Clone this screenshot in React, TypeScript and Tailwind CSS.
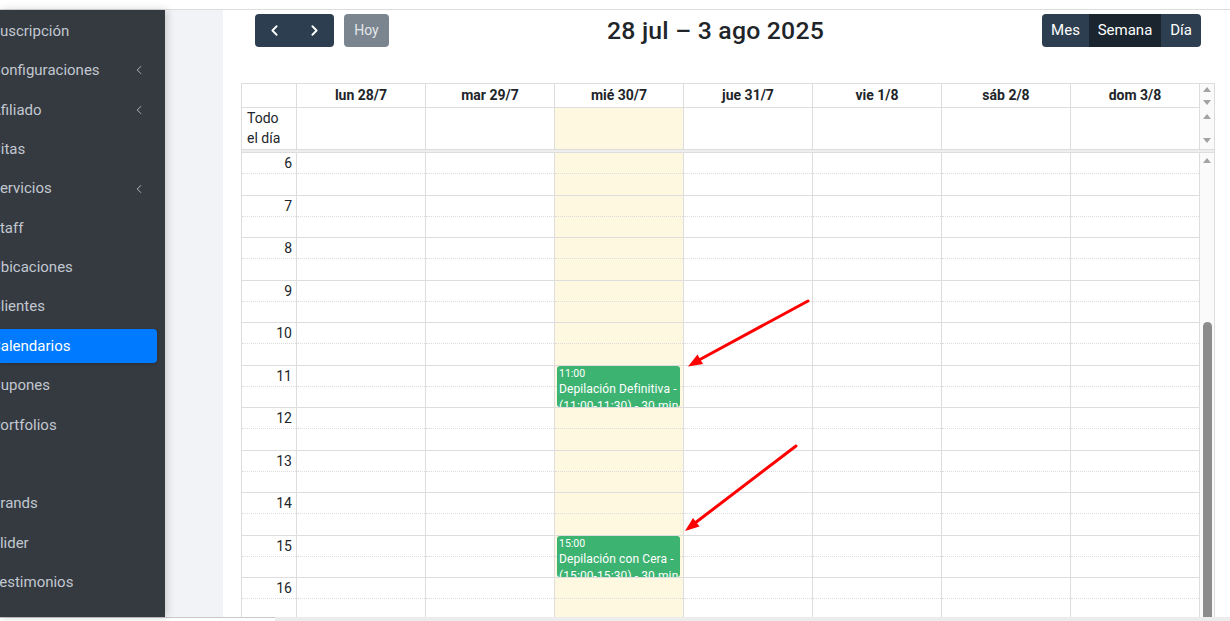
import { ChevronLeft, ChevronRight } from "lucide-react";

const menu = [
  { label: "Suscripción" },
  { label: "Configuraciones", sub: true },
  { label: "Afiliado", sub: true },
  { label: "Citas" },
  { label: "Servicios", sub: true },
  { label: "Staff" },
  { label: "Ubicaciones" },
  { label: "Clientes" },
  { label: "Calendarios", active: true },
  { label: "Cupones" },
  { label: "Portfolios" },
  { label: "" },
  { label: "Brands" },
  { label: "Slider" },
  { label: "Testimonios" },
];

const days = ["lun 28/7", "mar 29/7", "mié 30/7", "jue 31/7", "vie 1/8", "sáb 2/8", "dom 3/8"];
const hours = [6, 7, 8, 9, 10, 11, 12, 13, 14, 15, 16, 17];
const TODAY = 2;

const events = [
  { top: "top-[212.5px]", time: "11:00", title: "Depilación Definitiva -", detail: "(11:00-11:30) - 30 min" },
  { top: "top-[382.5px]", time: "15:00", title: "Depilación con Cera -", detail: "(15:00-15:30) - 30 min" },
];

function Tri({ up }: { up?: boolean }) {
  return (
    <svg width="8" height="5" viewBox="0 0 8 5" className="block">
      <path d={up ? "M0 5 L4 0 L8 5 Z" : "M0 0 L4 5 L8 0 Z"} fill="#a3a3a3" />
    </svg>
  );
}

function HourSlots() {
  return (
    <>
      {hours.map((h) => (
        <div key={h} className="h-[42.5px]">
          <div className="h-[21.25px] border-b border-dotted border-[#ddd]" />
          <div className="h-[21.25px] border-b border-[#ddd]" />
        </div>
      ))}
    </>
  );
}

function Sidebar() {
  return (
    <aside className="relative z-10 w-[165px] shrink-0 overflow-hidden bg-[#343a40] pt-[4px] shadow-[2px_0_8px_rgba(0,0,0,0.18)]">
      <ul className="flex flex-col gap-[5.4px]">
        {menu.map((item, i) => (
          <li
            key={i}
            className={
              item.active
                ? "flex h-[34px] w-[157px] items-center rounded-r-[4px] bg-[#007bff] text-white shadow-[0_1px_3px_rgba(0,0,0,0.2)]"
                : "flex h-[34px] w-[157px] items-center text-[#c2c7d0]"
            }
          >
            <span className="-ml-[9px] flex-1 whitespace-nowrap text-[15px]">{item.label}</span>
            {item.sub && <ChevronLeft size={14} strokeWidth={1.5} className="mr-[11px] text-[#c2c7d0]" />}
          </li>
        ))}
      </ul>
    </aside>
  );
}

function Toolbar() {
  return (
    <div className="flex items-center justify-between pl-[32px] pr-[29px] pt-[4px]">
      <div className="flex gap-[10px]">
        <div className="flex h-[33px] overflow-hidden rounded-[4px] bg-[#2c3e50] text-white">
          <button className="flex w-[39.5px] items-center justify-center">
            <ChevronLeft size={17} strokeWidth={2.6} />
          </button>
          <button className="flex w-[39.5px] items-center justify-center">
            <ChevronRight size={17} strokeWidth={2.6} />
          </button>
        </div>
        <button className="h-[33px] w-[45px] rounded-[4px] bg-[#7b8590] text-[14px] text-[#e4e7ea]">Hoy</button>
      </div>
      <h2 className="text-[24.8px] font-medium leading-[32px] tracking-[0.2px] text-[#212529]">28 jul – 3 ago 2025</h2>
      <div className="flex h-[33px] overflow-hidden rounded-[4px] bg-[#2c3e50] text-[15px] text-white">
        <button className="w-[47px]">Mes</button>
        <button className="w-[72px] bg-[#1a252f]">Semana</button>
        <button className="w-[40px]">Día</button>
      </div>
    </div>
  );
}

function Calendar() {
  return (
    <div className="ml-[18px] mt-[36px] w-[974px] border-x border-t border-[#ddd] text-[14px] text-[#212529]">
      {/* day headers */}
      <div className="flex h-[24px]">
        <div className="w-[55px] border-b border-r border-[#ddd]" />
        {days.map((d) => (
          <div key={d} className="flex w-[129px] items-center justify-center border-b border-r border-[#ddd] font-bold">
            {d}
          </div>
        ))}
        <div className="flex w-[14px] flex-col items-center justify-between bg-[#fafafa] py-[3px]">
          <Tri up />
          <Tri />
        </div>
      </div>
      {/* all day row */}
      <div className="flex h-[41px]">
        <div className="w-[55px] border-r border-[#ddd] pl-[5px] leading-[20px]">
          Todo
          <br />
          el día
        </div>
        {days.map((d, i) => (
          <div key={d} className={i === TODAY ? "w-[129px] border-r border-[#ddd] bg-[#fef8e0]" : "w-[129px] border-r border-[#ddd]"} />
        ))}
        <div className="flex w-[14px] flex-col items-center justify-between bg-[#fafafa] py-[6px]">
          <Tri up />
          <Tri />
        </div>
      </div>
      <div className="h-[4px] border-y border-[#ddd] bg-[#eee]" />
      {/* time grid */}
      <div className="flex h-[470px] overflow-hidden">
        <div className="w-[55px] shrink-0 border-r border-[#ddd]">
          {hours.map((h) => (
            <div key={h} className="h-[42.5px]">
              <div className="h-[21.25px] border-b border-dotted border-[#ddd] pr-[4px] text-right leading-[20px]">{h}</div>
              <div className="h-[21.25px] border-b border-[#ddd]" />
            </div>
          ))}
        </div>
        {days.map((d, i) => (
          <div
            key={d}
            className={
              i === TODAY
                ? "relative w-[129px] shrink-0 border-r border-[#ddd] bg-[#fef8e0]"
                : "relative w-[129px] shrink-0 border-r border-[#ddd]"
            }
          >
            <HourSlots />
            {i === TODAY &&
              events.map((ev) => (
                <div
                  key={ev.time}
                  className={`absolute left-[2px] right-[3px] ${ev.top} h-[41px] overflow-hidden rounded-[3px] bg-[#3cb371] px-[2px] pt-[1px] text-white`}
                >
                  <div className="text-[10.5px] leading-[14px]">{ev.time}</div>
                  <div className="whitespace-nowrap text-[12px] leading-[17px] tracking-[0.1px]">{ev.title}</div>
                  <div className="whitespace-nowrap text-[12px] leading-[17px] tracking-[0.1px]">{ev.detail}</div>
                </div>
              ))}
          </div>
        ))}
        <div className="flex w-[14px] shrink-0 flex-col items-center bg-[#fafafa] pt-[5px]">
          <Tri up />
          <div className="mt-[159px] w-[9px] flex-1 rounded-t-[5px] bg-[#8c8c8c]" />
        </div>
      </div>
    </div>
  );
}

export default function App() {
  return (
    <div className="relative h-[621px] w-[1230px] overflow-hidden bg-white font-['Roboto',sans-serif]">
      <div className="h-[10px] border-b border-[#dcdcdc]" />
      <div className="flex h-[607px]">
        <Sidebar />
        <div className="w-[58px] shrink-0 bg-[#f2f3f6]" />
        <main className="flex-1 overflow-hidden bg-white">
          <Toolbar />
          <Calendar />
        </main>
      </div>
      <div className="flex h-[4px]">
        <div className="w-[275px] border-t border-[#c8c8c8] bg-white" />
        <div className="flex-1 bg-[#ececec]" />
      </div>

      <svg className="pointer-events-none absolute left-0 top-0" width="1230" height="621">
        <line x1="808" y1="301" x2="699" y2="360" stroke="#f00" strokeWidth="3" strokeLinecap="round" />
        <polygon points="688,366.5 703,364 697.5,354.5" fill="#f00" />
        <line x1="796" y1="446" x2="695" y2="523" stroke="#f00" strokeWidth="3" strokeLinecap="round" />
        <polygon points="685,531 699.5,526.5 693,518" fill="#f00" />
      </svg>
    </div>
  );
}
